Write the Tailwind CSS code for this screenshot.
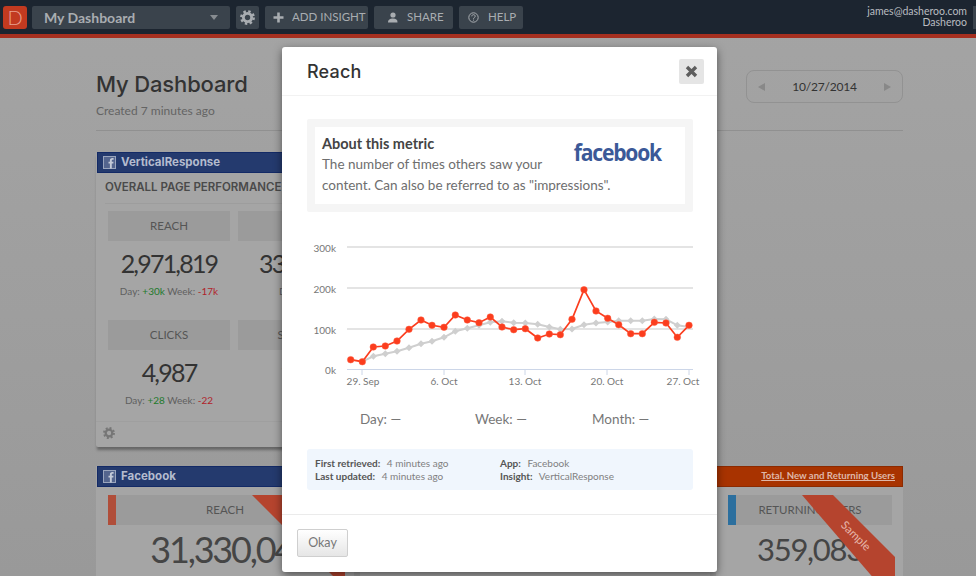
<!DOCTYPE html>
<html>
<head>
<meta charset="utf-8">
<script src="https://cdn.jsdelivr.net/npm/@tailwindcss/browser@4"></script>
</head>
<body class="relative h-[576px] w-[976px] overflow-hidden bg-gradient-to-b from-[#a4a4a4] to-[#999999] font-['Lato',sans-serif] text-[#3a3a3a]">
<!-- top bar -->
<header class="flex h-[34px] items-center bg-[#1c2530] pl-[3px] text-[#a9adb1]">
  <div class="flex h-[23px] w-[24px] items-center justify-center rounded-[3px] bg-[#c23a20] text-[20px] leading-none font-light text-[#e8a090]">D</div>
  <div class="ml-[5px] flex h-[23px] w-[198px] items-center justify-between rounded-[2px] bg-[#3a434c] pl-[12px] pr-[12px] text-[14px] font-bold text-[#a9adb1]">
    <span>My Dashboard</span>
    <span class="h-0 w-0 border-x-[4px] border-t-[5px] border-x-transparent border-t-[#878c91]"></span>
  </div>
  <div class="ml-[6px] flex h-[23px] w-[23px] items-center justify-center rounded-[2px] bg-[#3a434c]">
    <svg width="15" height="15" viewBox="0 0 16 16"><circle cx="8" cy="8" r="4.4" fill="none" stroke="#a9adb1" stroke-width="3"/><circle cx="8" cy="8" r="6.6" fill="none" stroke="#a9adb1" stroke-width="2.6" stroke-dasharray="2.6 2.58"/></svg>
  </div>
  <div class="ml-[6px] flex h-[23px] w-[103px] items-center rounded-[2px] bg-[#3a434c] pl-[8px] text-[11.500px] whitespace-nowrap">
    <svg class="shrink-0" width="11" height="11" viewBox="0 0 11 11"><path d="M5.500 0.500v10M0.500 5.500h10" stroke="#a9adb1" stroke-width="2.600"/></svg>
    <span class="ml-[8px]">ADD INSIGHT</span>
  </div>
  <div class="ml-[6px] flex h-[23px] w-[79px] items-center rounded-[2px] bg-[#3a434c] pl-[13px] text-[11.500px]">
    <svg class="shrink-0" width="11" height="11" viewBox="0 0 11 11"><circle cx="6" cy="3" r="2.600" fill="#a9adb1"/><path d="M1 10.500c0-3 2-4 5-4s4.500 1 4.500 4z" fill="#a9adb1"/></svg>
    <span class="ml-[9px]">SHARE</span>
  </div>
  <div class="ml-[6px] flex h-[23px] w-[64px] items-center rounded-[2px] bg-[#3a434c] pl-[9px] text-[11.500px]">
    <svg class="shrink-0" width="11" height="11" viewBox="0 0 11 11"><circle cx="5.500" cy="5.500" r="4.700" fill="none" stroke="#a9adb1" stroke-width="1"/><path d="M3.800 4.300c0-2.200 3.400-2.200 3.400 0 0 1.300-1.700 1.200-1.700 2.500M5.500 7.600v1" fill="none" stroke="#a9adb1" stroke-width="1"/></svg>
    <span class="ml-[9px]">HELP</span>
  </div>
  <div class="ml-auto text-right text-[10.500px] leading-[11px] text-[#b9bcc0]">
    <div>james@dasheroo.com</div>
    <div>Dasheroo</div>
  </div>
  <div class="ml-[6px] h-[23px] w-[3px] bg-[#3a434c]"></div>
</header>
<div class="h-[4px] bg-[#a63020]"></div>

<!-- dashboard under the overlay -->
<main class="ml-[96px] w-[807px]">
  <div class="flex h-[93px] items-start justify-between border-b border-[#909090]">
    <div>
      <h1 class="mt-[31px] font-['Inter',sans-serif] text-[22px] leading-[30px] font-medium tracking-[-0.15px] text-[#333]">My Dashboard</h1>
      <p class="mt-[5px] text-[12px] leading-[14px] text-[#646464]">Created 7 minutes ago</p>
    </div>
    <div class="mt-[32px] flex h-[33px] w-[157px] items-center justify-between rounded-[8px] border border-[#929292] px-[11px] text-[12px] tracking-[-0.2px] text-[#333]">
      <span class="h-0 w-0 border-y-[4px] border-r-[7px] border-y-transparent border-r-[#888]"></span>
      <span>10/27/2014</span>
      <span class="h-0 w-0 border-y-[4px] border-l-[7px] border-y-transparent border-l-[#888]"></span>
    </div>
  </div>

  <section class="mt-[21px] h-[295px] w-[536px] rounded-[2px] bg-[#a5a5a5] shadow-[0_4px_3px_-1px_rgba(0,0,0,0.35)]">
    <div class="ml-[1px] flex h-[21px] items-center border border-[#132a66] bg-[#243a6e] pl-[5px] font-['Inter',sans-serif] text-[11.500px] font-bold text-[#b4bcce]">
      <svg width="13" height="13" viewBox="0 0 13 13"><rect x="0.500" y="0.500" width="12" height="12" fill="#54658e" stroke="#9aa5bd"/><path d="M8.800 12.500V7.500h1.500l.2-1.800H8.800V4.600c0-.6.2-.9.9-.9h.9V2.100H9.400C7.700 2.100 6.900 3 6.900 4.400v1.300H5.500v1.800h1.400v5z" fill="#c4cad8"/></svg>
      <span class="ml-[5px]">VerticalResponse</span>
    </div>
    <div class="mx-[9px] flex h-[31px] items-center border-b border-[#9d9d9d] font-['Inter',sans-serif] text-[11.500px] font-semibold text-[#4a4a4a]">OVERALL PAGE PERFORMANCE</div>
    <div class="grid grid-cols-4 gap-x-[8px] px-[12px] pt-[7px]">
      <div class="h-[109px] text-center">
        <div class="flex h-[30px] items-center justify-center bg-[#9b9b9b] text-[11.500px] text-[#555]">REACH</div>
        <div class="mt-[5px] text-[25px] leading-[34px] tracking-[-1.800px] text-[#333]">2,971,819</div>
        <div class="mt-[4px] text-[10px] leading-[14px] text-[#5f5f5f]">Day: <span class="text-[#1f7a2c]">+30k</span> Week: <span class="text-[#b01f2a]">-17k</span></div>
      </div>
      <div class="h-[109px] text-center">
        <div class="flex h-[30px] items-center justify-center bg-[#9b9b9b] text-[11.500px] text-[#555]">LIKES</div>
        <div class="mt-[5px] text-[25px] leading-[34px] tracking-[-1.800px] text-[#333]">331,420</div>
        <div class="mt-[4px] text-[10px] leading-[14px] text-[#5f5f5f]">Day: <span class="text-[#1f7a2c]">+12</span></div>
      </div>
      <div></div><div></div>
      <div class="text-center">
        <div class="flex h-[30px] items-center justify-center bg-[#9b9b9b] text-[11.500px] text-[#555]">CLICKS</div>
        <div class="mt-[5px] text-[25px] leading-[34px] tracking-[-1.800px] text-[#333]">4,987</div>
        <div class="mt-[4px] text-[10px] leading-[14px] text-[#5f5f5f]">Day: <span class="text-[#1f7a2c]">+28</span> Week: <span class="text-[#b01f2a]">-22</span></div>
      </div>
      <div class="text-center">
        <div class="flex h-[30px] items-center justify-center bg-[#9b9b9b] text-[11.500px] text-[#555]">SHARES</div>
        <div class="mt-[5px] text-[25px] leading-[34px] tracking-[-1.800px] text-[#333]">120</div>
        <div class="mt-[4px] text-[10px] leading-[14px] text-[#5f5f5f]">Day:</div>
      </div>
    </div>
    <div class="mt-[14px] flex h-[22px] items-center border-t border-[#9f9f9f] pl-[7px]">
      <svg width="12" height="12" viewBox="0 0 16 16"><circle cx="8" cy="8" r="4.400" fill="none" stroke="#767676" stroke-width="3"/><circle cx="8" cy="8" r="6.600" fill="none" stroke="#767676" stroke-width="2.600" stroke-dasharray="2.600 2.580"/></svg>
    </div>
  </section>

  <div class="mt-[19px] flex gap-[6px]">
    <section class="relative w-[258px] shrink-0 bg-[#a5a5a5]">
      <div class="ml-[1px] flex h-[21px] items-center border border-[#132a66] bg-[#243a6e] pl-[5px] font-['Inter',sans-serif] text-[11.500px] font-bold text-[#b4bcce]">
        <svg width="13" height="13" viewBox="0 0 13 13"><rect x="0.500" y="0.500" width="12" height="12" fill="#54658e" stroke="#9aa5bd"/><path d="M8.800 12.500V7.500h1.500l.2-1.800H8.800V4.600c0-.6.2-.9.9-.9h.9V2.100H9.400C7.700 2.100 6.900 3 6.900 4.400v1.300H5.500v1.800h1.400v5z" fill="#c4cad8"/></svg>
        <span class="ml-[5px]">Facebook</span>
      </div>
      <div class="mx-[12px] mt-[8px] flex h-[30px] items-center bg-[#9b9b9b]">
        <span class="h-full w-[8px] bg-[#b04e3a]"></span>
        <span class="-ml-[8px] flex-1 text-center text-[11.500px] text-[#555]">REACH</span>
      </div>
      <div class="mt-[2px] ml-[12px] text-center text-[36px] leading-[44px] tracking-[-2.200px] text-[#454545]">31,330,042</div>
      <div class="mt-[3px] text-center text-[10px] leading-[14px] text-[#5f5f5f]">Day: <span class="text-[#1f7a2c]">390.7k</span> Week: <span class="text-[#1f7a2c]">245.4k</span></div>
      <svg class="absolute top-[29px] left-[156px]" width="102" height="86" viewBox="0 0 102 86"><polygon points="0,0 30,0 93,63 93,86 86,86" fill="#b5442e"/></svg>
    </section>
    <section class="relative flex-1 bg-[#a5a5a5]">
      <div class="h-[21px] border-y border-[#8c2a00] bg-[#a83300]"></div>
    </section>
    <section class="relative w-[187px] shrink-0 bg-[#a5a5a5]">
      <div class="-ml-[8px] flex h-[21px] items-center justify-end border border-[#8c2a00] bg-[#a83300] pr-[7px] text-[9.600px] font-bold text-[#dfb7a8] underline">Total, New and Returning Users</div>
      <div class="mt-[8px] mr-[11px] ml-[12px] flex h-[30px] items-center bg-[#9b9b9b]">
        <span class="h-full w-[8px] bg-[#2c6f9e]"></span>
        <span class="-ml-[8px] flex-1 text-center text-[11.500px] whitespace-nowrap text-[#555]">RETURNING USERS</span>
      </div>
      <div class="mt-[2px] ml-[12px] mr-[11px] text-center text-[31px] leading-[44px] tracking-[-1.300px] text-[#454545]">359,083</div>
      <div class="mt-[3px] text-center text-[10px] leading-[14px] text-[#5f5f5f]">Day: <span class="text-[#9c2230]">1.1k</span> Week: <span class="text-[#9c2230]">350</span></div>
      <div class="absolute top-[29px] right-[8px] h-[86px] w-[93px] [clip-path:polygon(0_0,31px_0,93px_62px,93px_86px,74px_86px)]">
        <div class="h-full w-full bg-[#b5442e]"></div>
      </div>
      <span class="absolute top-[61px] left-[122px] rotate-45 text-[11.500px] text-[#e6b6aa]">Sample</span>
    </section>
  </div>
</main>

<!-- modal -->
<div class="absolute top-[47px] left-[282px] flex h-[525px] w-[435px] flex-col rounded-[3px] bg-white shadow-[0_3px_9px_rgba(0,0,0,0.5)]">
  <div class="flex h-[49px] shrink-0 items-center justify-between border-b border-[#f2f2f2] pr-[13px] pl-[25px]">
    <h2 class="mt-[1px] font-['Inter',sans-serif] text-[18px] font-medium tracking-[0.2px] text-[#333]">Reach</h2>
    <button class="flex h-[25px] w-[25px] items-center justify-center rounded-[2px] bg-[#e5e5e5]">
      <svg width="13" height="13" viewBox="0 0 13 13"><path d="M2 2l9 9M11 2l-9 9" stroke="#5e5e5e" stroke-width="3.400"/></svg>
    </button>
  </div>
  <div class="pr-[24px] pl-[25px] pt-[23px]">
    <div class="rounded-[2px] bg-[#f5f5f5] px-[8px] py-[8px]">
      <div class="relative h-[77px] bg-white px-[7px] pt-[8px]">
        <p class="text-[14.500px] leading-[18px] font-bold text-[#444]">About this metric</p>
        <p class="mt-[1px] text-[13.500px] leading-[21px] text-[#6e6e6e]">The number of times others saw your<br>content. Can also be referred to as "impressions".</p>
        <span class="absolute top-[8px] right-[24px] origin-right scale-x-[0.88] font-['Open_Sans',sans-serif] text-[24px] leading-[34px] font-bold tracking-[-1.400px] text-[#3b5998]">facebook</span>
      </div>
    </div>
    <svg class="mt-[23px] block -ml-[25px]" width="435" height="160" viewBox="282 235 435 160" font-family="Lato, sans-serif" font-size="10" fill="#777">
      <g stroke="#dcdcdc" stroke-width="1.500" fill="none"><path d="M347 247H693M347 288H693M347 329H693"/></g>
      <path d="M347 369.500H693" stroke="#ccd6e8" stroke-width="1"/>
      <path d="M362 370v5M444 370v5M525 370v5M607 370v5M689 370v5" stroke="#ccd6e8"/>
      <g text-anchor="end"><text x="336" y="252">300k</text><text x="336" y="293">200k</text><text x="336" y="334">100k</text><text x="336" y="374">0k</text></g>
      <g text-anchor="middle"><text x="363" y="385">29. Sep</text><text x="444" y="385">6. Oct</text><text x="525" y="385">13. Oct</text><text x="607" y="385">20. Oct</text><text x="683" y="385">27. Oct</text></g>
      <polyline fill="none" stroke="#cfcfcf" stroke-width="2" points="362,361.700 373.400,356.300 385.300,353.700 397,351.300 409,347.700 421,343.700 432,341.300 444,337.300 455.300,331.300 467.300,328.300 479,325.300 490.300,322.300 502,321.300 513.700,322.700 525.300,323 537.700,324.300 549.300,327 560.300,329.300 572,329 584,324.700 596,323 607.700,322 618.700,320.700 630.700,320.700 642.300,320.700 654.300,319 666,319.300 677.300,325.300 689,327"/>
      <g fill="#cfcfcf"><path d="M373.400 352.800l3.500 3.500-3.500 3.500-3.500-3.500zM385.300 350.200l3.500 3.500-3.500 3.500-3.500-3.500zM397 347.800l3.500 3.500-3.500 3.500-3.500-3.500zM409 344.200l3.500 3.500-3.500 3.500-3.500-3.500zM421 340.200l3.500 3.500-3.500 3.500-3.500-3.500zM432 337.800l3.500 3.500-3.500 3.500-3.500-3.500zM444 333.800l3.500 3.500-3.500 3.500-3.500-3.500zM455.300 327.800l3.500 3.500-3.500 3.500-3.500-3.500zM467.300 324.800l3.500 3.500-3.500 3.500-3.500-3.500zM479 321.800l3.500 3.500-3.500 3.500-3.500-3.500zM490.300 318.800l3.500 3.500-3.500 3.500-3.500-3.500zM502 317.800l3.500 3.500-3.500 3.500-3.500-3.500zM513.700 319.200l3.500 3.500-3.500 3.500-3.500-3.500zM525.300 319.500l3.500 3.500-3.500 3.500-3.500-3.500zM537.700 320.800l3.500 3.500-3.500 3.500-3.500-3.500zM549.300 323.500l3.500 3.500-3.500 3.500-3.500-3.500zM560.300 325.800l3.500 3.500-3.500 3.500-3.500-3.500zM572 325.500l3.500 3.500-3.500 3.500-3.500-3.500zM584 321.200l3.500 3.500-3.500 3.500-3.500-3.500zM596 319.500l3.500 3.500-3.500 3.500-3.500-3.500zM607.700 318.500l3.500 3.500-3.500 3.500-3.500-3.500zM618.700 317.200l3.500 3.500-3.500 3.500-3.500-3.500zM630.700 317.200l3.500 3.500-3.500 3.500-3.500-3.500zM642.300 317.200l3.500 3.500-3.500 3.500-3.500-3.500zM654.300 315.500l3.500 3.500-3.500 3.500-3.500-3.500zM666 315.800l3.500 3.500-3.500 3.500-3.500-3.500zM677.300 321.800l3.500 3.500-3.500 3.500-3.500-3.500z"/></g>
      <polyline fill="none" stroke="#fb3d1e" stroke-width="1.700" points="350.700,359.700 362.300,361.700 373.300,347 385.300,346 397,341 409,329.300 421,320 432,325.300 444,327.300 455.300,315 467.300,320 479,322.700 490.300,317 502,327 513.700,329.700 525.300,328.700 537.700,338 549.300,334 560.300,334.700 572,319.300 584,289.700 596,311 607.700,318.300 618.700,324.700 630.700,333.700 642.300,333.700 654.300,322.300 666,323 677.300,337.300 689,325.300"/>
      <g fill="#fb3d1e" stroke="#ff5a3c" stroke-width="0.500">
        <circle cx="350.700" cy="359.700" r="3.300"/><circle cx="362.300" cy="361.700" r="3.300"/><circle cx="373.300" cy="347" r="3.300"/><circle cx="385.300" cy="346" r="3.300"/><circle cx="397" cy="341" r="3.300"/><circle cx="409" cy="329.300" r="3.300"/><circle cx="421" cy="320" r="3.300"/><circle cx="432" cy="325.300" r="3.300"/><circle cx="444" cy="327.300" r="3.300"/><circle cx="455.300" cy="315" r="3.300"/><circle cx="467.300" cy="320" r="3.300"/><circle cx="479" cy="322.700" r="3.300"/><circle cx="490.300" cy="317" r="3.300"/><circle cx="502" cy="327" r="3.300"/><circle cx="513.700" cy="329.700" r="3.300"/><circle cx="525.300" cy="328.700" r="3.300"/><circle cx="537.700" cy="338" r="3.300"/><circle cx="549.300" cy="334" r="3.300"/><circle cx="560.300" cy="334.700" r="3.300"/><circle cx="572" cy="319.300" r="3.300"/><circle cx="584" cy="289.700" r="3.300"/><circle cx="596" cy="311" r="3.300"/><circle cx="607.700" cy="318.300" r="3.300"/><circle cx="618.700" cy="324.700" r="3.300"/><circle cx="630.700" cy="333.700" r="3.300"/><circle cx="642.300" cy="333.700" r="3.300"/><circle cx="654.300" cy="322.300" r="3.300"/><circle cx="666" cy="323" r="3.300"/><circle cx="677.300" cy="337.300" r="3.300"/><circle cx="689" cy="325.300" r="3.300"/>
      </g>
    </svg>
    <div class="mt-[15px] grid grid-cols-[115px_117px_1fr] pl-[53px] text-[13.500px] leading-[18px] text-[#777]">
      <span>Day: —</span>
      <span>Week: —</span>
      <span>Month: —</span>
    </div>
    <div class="mt-[21px] grid h-[41px] grid-cols-[185px_1fr] content-center rounded-[3px] bg-[#f0f6fd] pl-[8px] text-[10px] leading-[13px] text-[#808080]">
      <div><b class="mr-[4px] font-bold text-[#555]">First retrieved:</b> 4 minutes ago<br><b class="mr-[4px] font-bold text-[#555]">Last updated:</b> 4 minutes ago</div>
      <div><b class="mr-[4px] font-bold text-[#555]">App:</b> Facebook<br><b class="mr-[4px] font-bold text-[#555]">Insight:</b> VerticalResponse</div>
    </div>
  </div>
  <div class="mt-[24px] border-t border-[#ebebeb] px-[15px] pt-[14px]">
    <button class="h-[28px] w-[51px] rounded-[2px] border border-[#cfcfcf] bg-gradient-to-b from-white to-[#e6e6e6] text-[12.500px] text-[#777]">Okay</button>
  </div>
</div>
</body>
</html>
